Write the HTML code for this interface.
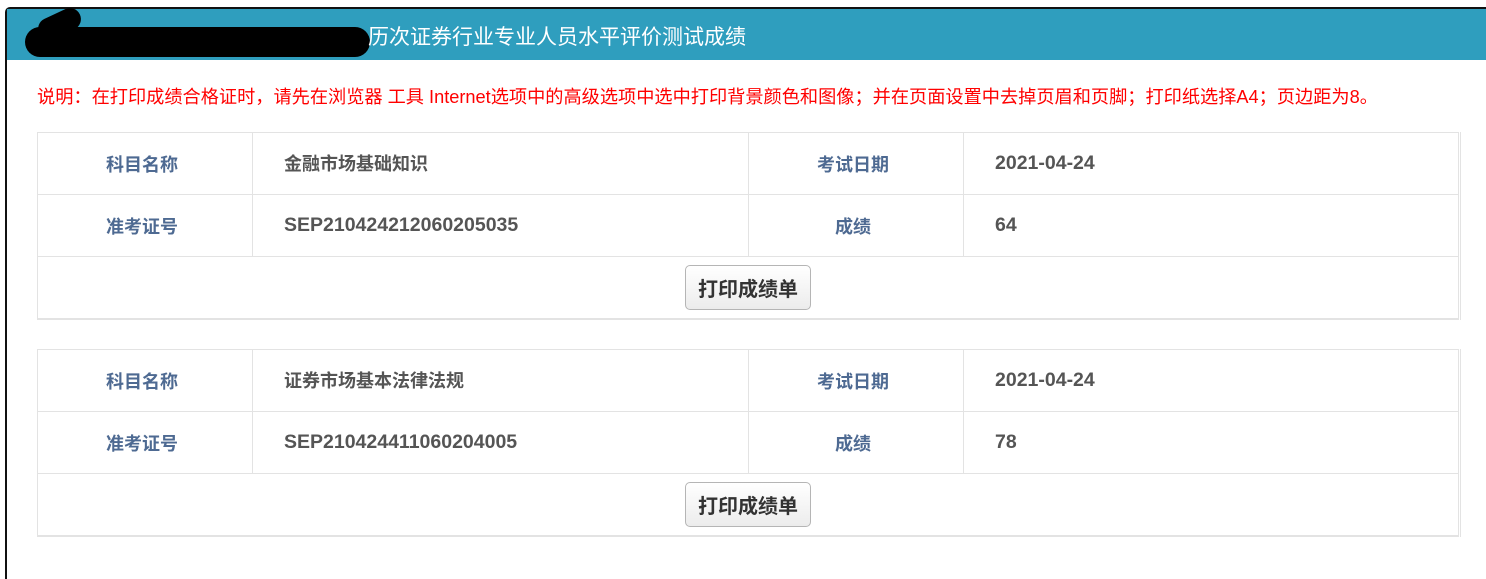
<!DOCTYPE html>
<html><head><meta charset="utf-8"><style>
html,body{margin:0;background:#fff;font-family:"Liberation Sans","Noto Sans CJK SC",sans-serif;overflow:hidden;width:1486px;height:568px;}
.frame{position:absolute;left:5px;top:7px;width:1490px;height:570px;border:2px solid #111;border-right:none;border-bottom:none;border-top-left-radius:5px;}
.hdr{position:absolute;left:7px;top:9px;width:1479px;height:51px;background:#2f9ebe;}
.hdr span{position:absolute;left:361px;top:12px;color:#fff;font-size:21px;}
.blot{position:absolute;left:18px;top:18px;width:345px;height:30px;background:#000;border-radius:15px;}
.blot2{position:absolute;left:30px;top:4px;width:45px;height:22px;background:#000;border-radius:12px;transform:rotate(-25deg);}
.note{position:absolute;left:37px;top:83px;color:#f00;font-size:18.2px;white-space:nowrap;}
table{position:absolute;left:37px;width:1424px;border-collapse:collapse;border:1px solid #e3e3e3;border-right:3px double #e3e3e3;border-bottom:2px solid #e3e3e3;}
td{border:1px solid #e3e3e3;height:61px;padding:0;font-size:18px;font-weight:bold;color:#555;line-height:20px;}
td.l{text-align:center;color:#4e6a92;padding-right:6px;}
td.l,td.c{position:relative;top:1px;}
td.v{padding-left:31px;}
.n span{font-size:19.5px;position:relative;top:-1px;}
button{font-family:inherit;font-size:20px;font-weight:bold;color:#333;background:linear-gradient(#fff,#ececec);border:1px solid #b5b5b5;border-radius:5px;width:126px;height:45px;padding:0;}
</style></head><body>
<div class="frame"></div>
<div class="hdr"><div class="blot"></div><div class="blot2"></div><span>历次证券行业专业人员水平评价测试成绩</span></div>
<div class="note">说明：在打印成绩合格证时，请先在浏览器 工具 Internet选项中的高级选项中选中打印背景颜色和图像；并在页面设置中去掉页眉和页脚；打印纸选择A4；页边距为8。</div>
<table style="top:132px"><tr><td class="l" style="width:208px">科目名称</td><td class="v" style="width:464px">金融市场基础知识</td><td class="l" style="width:208px">考试日期</td><td class="v n"><span>2021-04-24</span></td></tr>
<tr><td class="l">准考证号</td><td class="v n"><span>SEP210424212060205035</span></td><td class="l">成绩</td><td class="v n"><span>64</span></td></tr>
<tr><td colspan="4" style="text-align:center"><button>打印成绩单</button></td></tr></table>
<table style="top:349px"><tr><td class="l" style="width:208px">科目名称</td><td class="v" style="width:464px">证券市场基本法律法规</td><td class="l" style="width:208px">考试日期</td><td class="v n"><span>2021-04-24</span></td></tr>
<tr><td class="l">准考证号</td><td class="v n"><span>SEP210424411060204005</span></td><td class="l">成绩</td><td class="v n"><span>78</span></td></tr>
<tr><td colspan="4" style="text-align:center"><button>打印成绩单</button></td></tr></table>
</body></html>
